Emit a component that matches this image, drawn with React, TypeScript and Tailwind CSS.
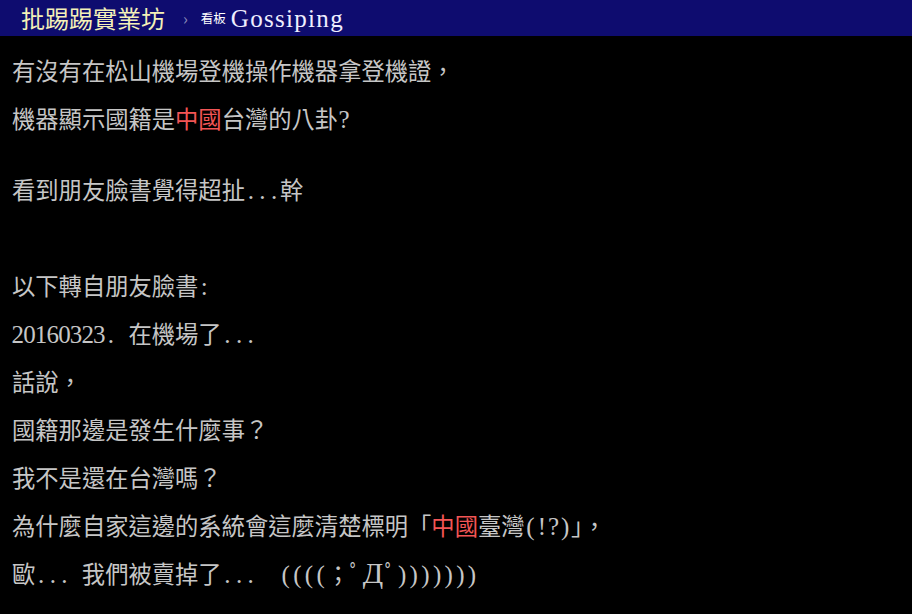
import React from 'react';

// half-width cell, like the fixed grid of a BBS terminal
function H({ t }: { t: string }) {
  return (
    <>
      {Array.from(t).map((c, i) => (
        <span key={i} className="inline-flex justify-center w-[11.65px] font-['Liberation_Serif',serif] text-[25px]">
          {c === ' ' ? '\u00a0' : c}
        </span>
      ))}
    </>
  );
}

function Red({ children }: { children: React.ReactNode }) {
  return <span className="text-[#f25555]">{children}</span>;
}

function Line({ children, className = '' }: { children: React.ReactNode; className?: string }) {
  return <div className={`h-12 leading-[48px] whitespace-nowrap ${className}`}>{children}</div>;
}

export default function App() {
  return (
    <div className="min-h-screen bg-black overflow-hidden">
      <div className="h-9 bg-[#0e0c6f] flex items-center pl-[21px] font-['Noto_Sans_CJK_TC',sans-serif]">
        <span className="text-[24px] leading-none text-[#f4f1b8]">批踢踢實業坊</span>
        <span className="ml-[18px] text-[16px] leading-none text-[#8b8ab8]">›</span>
        <span className="ml-[13px] text-[12.5px] leading-none text-white">看板</span>
        <span className="ml-[5px] font-['Liberation_Serif',serif] text-[25px] leading-none text-[#eeeeff] tracking-[1.3px]">
          Gossiping
        </span>
      </div>

      <div className="pt-[10px] pl-3 text-[23.3px] text-[#c6c6c6] font-['Noto_Sans_CJK_TC',sans-serif]">
        <Line>有沒有在松山機場登機操作機器拿登機證，</Line>
        <Line>
          機器顯示國籍是<Red>中國</Red>台灣的八卦<H t="?" />
        </Line>
        <Line className="mt-[23px]">
          看到朋友臉書覺得超扯<H t="..." />幹
        </Line>
        <Line>{'\u00a0'}</Line>
        <Line>
          以下轉自朋友臉書<H t=":" />
        </Line>
        <Line>
          <H t="20160323. " />在機場了<H t="..." />
        </Line>
        <Line>話說，</Line>
        <Line>國籍那邊是發生什麼事？</Line>
        <Line>我不是還在台灣嗎？</Line>
        <Line>
          為什麼自家這邊的系統會這麼清楚標明「<Red>中國</Red>臺灣<H t="(!?)" />」，
        </Line>
        <Line>
          歐<H t="... " />我們被賣掉了<H t="...  ((((" />；ﾟ
          <span className="inline-flex justify-center w-[23.3px] font-['Liberation_Serif',serif] text-[30px]">Д</span>
          ﾟ<H t=")))))))" />
        </Line>
      </div>
    </div>
  );
}
